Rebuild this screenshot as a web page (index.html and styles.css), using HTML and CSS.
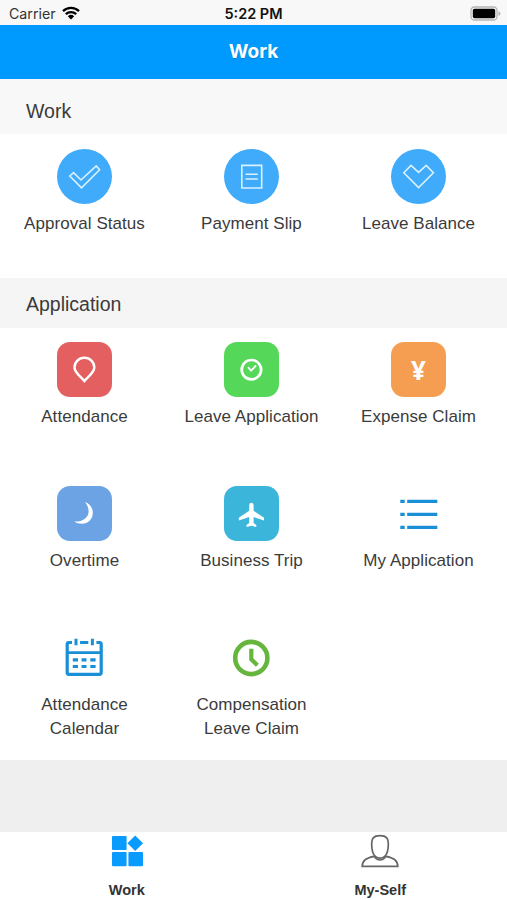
FILE: index.html
```
<!DOCTYPE html>
<html lang="en">
<head>
    <meta charset="UTF-8">
    <meta name="viewport" content="width=device-width, initial-scale=1.0">
    <title>Work</title>
    <link rel="stylesheet" href="styles.css">
</head>
<body>
    <div class="app">
        <div class="status-bar">
            <div class="carrier">
                <span>Carrier</span>
                <svg class="wifi" viewBox="0 0 18 14" width="18" height="14">
                    <path d="M1 5.2A11.5 11.5 0 0 1 17 5.2M3.8 8.2A7.5 7.5 0 0 1 14.2 8.2" fill="none" stroke="#000" stroke-width="2.3"/>
                    <path d="M9 13.6L5.8 10.3A4.8 4.8 0 0 1 12.2 10.3Z"/>
                </svg>
            </div>
            <span class="time">5:22 PM</span>
            <svg class="battery" viewBox="0 0 31 15" width="31" height="15">
                <rect x="1" y="1" width="26" height="13" rx="3.5" fill="#f8f8f8" stroke="#b4b4b4" stroke-width="1.3"/>
                <rect x="2.8" y="2.8" width="22.4" height="9.4" rx="1.8"/>
                <path d="M28.5 5Q30.5 6 30.5 7.5T28.5 10Z" fill="#b4b4b4"/>
            </svg>
        </div>

        <header class="navbar"><h1>Work</h1></header>

        <main>
            <h2 class="section-title first">Work</h2>
            <div class="grid work-grid">
                <div class="item">
                    <svg class="icon round" viewBox="0 0 55 55">
                        <path d="M12.8 27L16.5 23.7L24 31L39.2 16.9L42.6 20.8L24.5 38.8Z"/>
                    </svg>
                    <span>Approval Status</span>
                </div>
                <div class="item">
                    <svg class="icon round" viewBox="0 0 55 55">
                        <path d="M17.8 16.4H37.7V39H17.8ZM21.5 25.3H33.8M21.5 30H33.8"/>
                    </svg>
                    <span>Payment Slip</span>
                </div>
                <div class="item">
                    <svg class="icon round" viewBox="0 0 55 55">
                        <path d="M12.8 23.8L20 16.4L27.6 23.3L35.2 16.4L42.4 23.8L27.6 38.5Z"/>
                    </svg>
                    <span>Leave Balance</span>
                </div>
            </div>

            <h2 class="section-title">Application</h2>
            <div class="grid">
                <div class="item">
                    <svg class="icon square red" viewBox="0 0 55 55">
                        <path d="M27.4 39C24.7 35.3 17.5 31 17.5 25.5A9.9 9.7 0 0 1 37.3 25.5C37.3 31 30.1 35.3 27.4 39Z" fill="none" stroke="#fff" stroke-width="2.5"/>
                    </svg>
                    <span>Attendance</span>
                </div>
                <div class="item">
                    <svg class="icon square green" viewBox="0 0 55 55">
                        <circle cx="27.4" cy="27.7" r="9.7" fill="none" stroke="#fff" stroke-width="2.7"/>
                        <path d="M24 25.2L27.1 28.6L32.1 23.5" fill="none" stroke="#fff" stroke-width="1.8"/>
                    </svg>
                    <span>Leave Application</span>
                </div>
                <div class="item">
                    <svg class="icon square orange" viewBox="0 0 55 55">
                        <text class="yen" x="27.5" y="37.6" text-anchor="middle">¥</text>
                    </svg>
                    <span>Expense Claim</span>
                </div>
                <div class="item">
                    <svg class="icon square blue" viewBox="0 0 55 55">
                        <path d="M28 16C33 17.8 35.8 21.8 35.8 26.8C35.8 33.3 31.1 37.8 24.9 37.8C22.1 37.8 19.3 37.1 17.3 35.6C25.8 35.9 31.4 31.8 31.6 25.5C31.7 22 30.2 18.8 28 16Z" fill="#fff"/>
                    </svg>
                    <span>Overtime</span>
                </div>
                <div class="item">
                    <svg class="icon square cyan" viewBox="0 0 55 55">
                        <path d="M27.4 16.7C28.9 16.7 29.6 18 29.6 19.3V24.8L40 31.8V34.5L29.6 31V37L32.3 39.1V41L27.4 39.8L22.5 41V39.1L25.2 37V31L14.8 34.5V31.8L25.2 24.8V19.3C25.2 18 25.9 16.7 27.4 16.7Z" fill="#fff"/>
                    </svg>
                    <span>Business Trip</span>
                </div>
                <div class="item">
                    <svg class="icon" viewBox="0 0 55 55">
                        <path d="M9.3 15.3H13.7M16.2 15.3H46.3M9.3 28.3H13.7M16.2 28.3H46.3M9.3 41.3H13.7M16.2 41.3H46.3" stroke="#188fd6" stroke-width="3.3"/>
                    </svg>
                    <span>My Application</span>
                </div>
                <div class="item">
                    <svg class="icon" viewBox="0 0 55 55">
                        <g fill="none" stroke="#188fd6">
                            <path d="M15 12.5H12Q10.2 12.5 10.2 14.3V42.6Q10.2 44.4 12 44.4H42.4Q44.2 44.4 44.2 42.6V14.3Q44.2 12.5 42.4 12.5H39.4M23.1 12.5H31.3" stroke-width="3.2"/>
                            <path d="M9.5 22.6H45" stroke-width="2.7"/>
                            <path d="M19 8.8V15.3M35.4 8.8V15.3" stroke-width="3"/>
                            <path d="M15.8 29.8H21M24.6 29.8H29.5M33.3 29.8H38.6M15.8 36.5H21M24.6 36.5H29.5M33.3 36.5H38.6" stroke-width="3.2"/>
                        </g>
                    </svg>
                    <span>Attendance<br>Calendar</span>
                </div>
                <div class="item">
                    <svg class="icon" viewBox="0 0 55 55">
                        <circle cx="27.3" cy="28" r="16.1" fill="none" stroke="#66b53c" stroke-width="4.6"/>
                        <path d="M27.3 18.8V29.3L33.4 35.2" fill="none" stroke="#66b53c" stroke-width="4.2"/>
                    </svg>
                    <span>Compensation<br>Leave Claim</span>
                </div>
            </div>
        </main>

        <nav class="tabbar">
            <div class="tab">
                <svg viewBox="0 0 40 34" width="40" height="34" fill="#0a9bff">
                    <rect x="5" y="2" width="14.6" height="14" rx="1"/>
                    <rect x="5" y="18" width="14.6" height="14.3" rx="1"/>
                    <rect x="21.4" y="18" width="14.6" height="14.3" rx="1"/>
                    <path d="M28.2 1.5L36 9.2L28.2 16.9L20.4 9.2Z"/>
                </svg>
                <span>Work</span>
            </div>
            <div class="tab">
                <svg viewBox="0 0 40 34" width="40" height="34" fill="none" stroke="#666" stroke-width="1.7">
                    <path d="M20 1.6C26 1.6 28.5 3.8 28.3 10.8C28.1 19.5 25.2 24.2 20 24.2S11.9 19.5 11.7 10.8C11.5 3.8 14 1.6 20 1.6Z"/>
                    <path d="M14.2 22.4C7.5 23.4 2.3 26 2.2 32.3H37.8C37.7 26 32.5 23.4 25.8 22.4C23 27.2 17 27.2 14.2 22.4Z"/>
                </svg>
                <span>My-Self</span>
            </div>
        </nav>
    </div>
</body>
</html>
```
FILE: styles.css
```
* {
    box-sizing: border-box;
}

body {
    margin: 0;
    background-color: #efefef;
    font-family: "Liberation Sans", Arial, sans-serif;
    color: #3b3b3b;
    overflow: hidden;
}

.app {
    display: flex;
    flex-direction: column;
    height: 100vh;
}

/* Status bar */
.status-bar {
    height: 25px;
    flex: none;
    display: grid;
    grid-template-columns: 1fr auto 1fr;
    align-items: center;
    padding: 2px 6px 0 9px;
    background: #f8f8f8;
    font-family: Inter, sans-serif;
    font-size: 14.2px;
    color: #333;
}

.carrier {
    display: flex;
    align-items: center;
    gap: 6px;
}

.wifi {
    margin-bottom: 2px;
}

.time {
    padding-right: 3px;
    font-size: 14.5px;
    font-weight: 600;
    color: #111;
}

.battery {
    justify-self: end;
    margin-bottom: 1px;
}

/* Header */
.navbar {
    height: 54px;
    flex: none;
    display: flex;
    align-items: center;
    justify-content: center;
    padding-bottom: 2px;
    background: #009aff;
}

.navbar h1 {
    margin: 0;
    font-family: Inter, sans-serif;
    font-size: 19px;
    font-weight: 700;
    color: #fff;
    text-shadow: 0 1px 1px rgba(0, 0, 0, 0.2);
}

main {
    flex: 1;
}

.section-title {
    height: 50px;
    margin: 0;
    padding: 1px 26px 0;
    line-height: 50px;
    font-size: 19.5px;
    font-weight: normal;
    background: #f5f5f5;
}

.section-title.first {
    height: 55px;
    padding-top: 7px;
    background: #f8f8f8;
}

/* Icon grid */
.grid {
    display: grid;
    grid-template-columns: repeat(3, 1fr);
    grid-auto-rows: 144px;
    padding: 0 5px 0 1px;
    background: #fff;
}

.work-grid {
    height: 144px;
    padding-top: 1px;
}

.item {
    display: flex;
    flex-direction: column;
    align-items: center;
    gap: 8px;
    padding-top: 14px;
    font-size: 17px;
    line-height: 24px;
    letter-spacing: 0.05px;
    text-align: center;
}

.icon {
    width: 55px;
    height: 55px;
}

.round {
    border-radius: 50%;
    background: #3fabfa;
}

.round path {
    fill: none;
    stroke: #d9f1ff;
    stroke-width: 1.6;
}

.square { border-radius: 13px; }
.red { background: #e46060; }
.green { background: #55d859; }
.orange { background: #f59e52; }
.blue { background: #6ba3e5; }
.cyan { background: #3bb6da; }

.yen {
    font-family: "Noto Sans", sans-serif;
    font-size: 26px;
    font-weight: bold;
    fill: #fff;
}

/* Bottom tabs */
.tabbar {
    height: 68px;
    flex: none;
    display: flex;
    background: #fff;
}

.tab {
    flex: 1;
    display: flex;
    flex-direction: column;
    align-items: center;
    gap: 13px;
    padding-top: 2px;
    font-size: 14.5px;
    font-weight: bold;
    line-height: 18px;
    color: #333;
}
```
